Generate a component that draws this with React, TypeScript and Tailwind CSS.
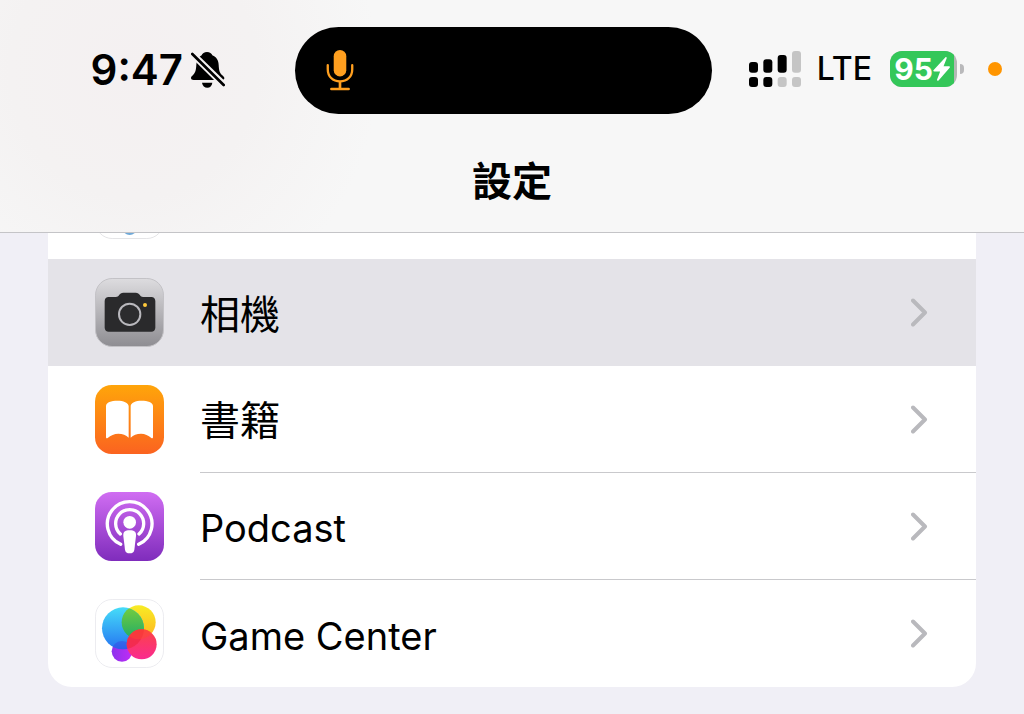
import type { ReactNode } from "react";
import clsx from "clsx";

interface SettingsItem {
  id: string;
  label: string;
  icon: ReactNode;
  active?: boolean;
  latin?: boolean;
}

function BellOffIcon() {
  return (
    <svg viewBox="0 0 102 108" className="h-9 w-[34px] shrink-0" aria-hidden="true">
      <defs>
        <mask id="bell-cut">
          <rect width="102" height="108" fill="#fff" />
          <path d="M-4 -2L106 106" stroke="#000" strokeWidth="20" />
        </mask>
      </defs>
      <g mask="url(#bell-cut)">
        <path d="M48 0c8 0 14 4 16 10 12 5 19 15 19 29 1 18 3 24 11 31 4 4 6 6 6 9 0 4-3 5-7 5H8c-5 0-8-2-8-6 0-3 2-5 6-9 7-7 9-14 10-31 0-14 6-23 16-28C34 4 40 0 48 0z" />
      </g>
      <path d="M33 92h31c-1 9-7 15-15 15s-15-6-16-15z" />
      <path d="M4 6L98 99" stroke="#000" strokeWidth="8" strokeLinecap="round" />
    </svg>
  );
}

function MicIcon() {
  return (
    <svg viewBox="0 0 84 124" className="h-[41px] w-7" fill="none" stroke="#ff9f1f" aria-hidden="true">
      <rect x="23" y="0" width="38" height="80" rx="19" fill="#ff9f1f" stroke="none" />
      <path d="M5 46v12c0 22 15 37 37 37s37-15 37-37V46" strokeWidth="7" strokeLinecap="round" />
      <path d="M42 94v23" strokeWidth="8" />
      <path d="M16 118h52" strokeWidth="8" strokeLinecap="round" />
    </svg>
  );
}

function SignalIcon() {
  return (
    <svg viewBox="0 0 156 108" className="h-9 w-[52px]" role="img" aria-label="Signal">
      <rect x="0" y="33" width="27" height="32" rx="9" />
      <rect x="43" y="25" width="27" height="40" rx="9" />
      <rect x="86" y="12" width="27" height="53" rx="9" />
      <rect x="129" y="0" width="27" height="65" rx="9" fill="#c5c5c5" />
      <rect x="0" y="78" width="27" height="30" rx="9" />
      <rect x="43" y="78" width="27" height="30" rx="9" />
      <rect x="86" y="78" width="27" height="30" rx="9" fill="#c5c5c5" />
      <rect x="129" y="78" width="27" height="30" rx="9" fill="#c5c5c5" />
    </svg>
  );
}

function Battery() {
  return (
    <div className="flex items-center gap-[3px]">
      <div className="flex h-9 w-[67px] overflow-hidden rounded-xl bg-[#b4b8b5]">
        <div className="flex w-16 items-center justify-center rounded-r-xs bg-[#34c759] text-white">
          <span className="text-[30px] leading-9 font-bold">95</span>
          <svg viewBox="0 0 50 70" className="h-6 w-[17px]" fill="currentColor" aria-hidden="true">
            <path d="M36 1L2 38c-2 2-1 4 2 4h17L12 66c-1 4 2 5 5 2l32-37c2-2 1-4-2-4H31l9-23c1-4-2-6-4-3z" />
          </svg>
        </div>
      </div>
      <div className="h-[10px] w-1 rounded-r-full bg-[#b9b9bb]" />
    </div>
  );
}

function ChevronIcon() {
  return (
    <svg viewBox="0 0 17 29" className="h-[29px] w-[17px]" fill="none" stroke="#b9b9bd" aria-hidden="true">
      <path d="M2 2.500L14 14.500L2 26.500" strokeWidth="4" strokeLinecap="round" strokeLinejoin="round" />
    </svg>
  );
}

function CameraIcon() {
  return (
    <svg viewBox="0 0 207 207" className="size-[69px] shrink-0" aria-hidden="true">
      <defs>
        <linearGradient id="camera-bg" x2="0" y2="1">
          <stop stopColor="#dddcdf" />
          <stop offset="1" stopColor="#8e8d92" />
        </linearGradient>
      </defs>
      <rect x="1.500" y="1.500" width="204" height="204" rx="50" fill="url(#camera-bg)" stroke="#c3c2c6" strokeWidth="3" />
      <path
        d="M41 57h22c4 0 7-2 9-5 3-5 7-8 13-8h37c6 0 10 3 13 8 2 3 5 5 9 5h25c7 0 12 5 12 12v80c0 7-5 12-12 12H41c-7 0-12-5-12-12V69c0-7 5-12 12-12z"
        fill="#2a2a2c"
      />
      <circle cx="104" cy="109" r="32" fill="#2c2c2e" stroke="#b9b8bd" strokeWidth="6" />
      <circle cx="150" cy="81" r="6" fill="#ffc93c" />
    </svg>
  );
}

function BooksIcon() {
  return (
    <svg viewBox="0 0 207 207" className="size-[69px] shrink-0" aria-hidden="true">
      <defs>
        <linearGradient id="books-bg" x2="0" y2="1">
          <stop stopColor="#ffa50a" />
          <stop offset="1" stopColor="#fb6320" />
        </linearGradient>
      </defs>
      <rect width="207" height="207" rx="50" fill="url(#books-bg)" />
      <g fill="#fff">
        <path d="M33 63c0-11 16-16 34-16s34 6 34 17v94c-8-8-18-12-31-12-12 0-23 5-32 13-3 2-5 1-5-3z" />
        <path d="M174 63c0-11-16-16-34-16s-33 6-33 17v94c8-8 18-12 31-12 12 0 22 5 31 13 3 2 5 1 5-3z" />
      </g>
    </svg>
  );
}

function PodcastIcon() {
  return (
    <svg viewBox="0 0 207 207" className="size-[69px] shrink-0" aria-hidden="true">
      <defs>
        <linearGradient id="podcast-bg" x2="0" y2="1">
          <stop stopColor="#d06df2" />
          <stop offset="1" stopColor="#7f2cbc" />
        </linearGradient>
      </defs>
      <rect width="207" height="207" rx="50" fill="url(#podcast-bg)" />
      <g fill="none" stroke="#fff" strokeWidth="10" strokeLinecap="round">
        <path d="M77 157a67 67 0 1 1 54 0" />
        <path d="M76 126a42 42 0 1 1 56 0" />
      </g>
      <circle cx="104" cy="91" r="19" fill="#fff" />
      <path d="M104 115c14 0 20 5 19 17l-5 41c-1 8-6 11-14 11s-13-3-14-11l-5-41c-1-12 5-17 19-17z" fill="#fff" />
    </svg>
  );
}

function GameCenterIcon() {
  return (
    <svg viewBox="0 0 207 207" className="size-[69px] shrink-0" aria-hidden="true">
      <defs>
        <linearGradient id="gc-blue" x2="0" y2="1">
          <stop stopColor="#45dcf8" />
          <stop offset="1" stopColor="#2675f2" />
        </linearGradient>
        <linearGradient id="gc-yellow" x2="0" y2="1">
          <stop stopColor="#f7ec25" />
          <stop offset="1" stopColor="#ffb321" />
        </linearGradient>
        <linearGradient id="gc-green" x2="0" y2="1">
          <stop stopColor="#79cf3c" />
          <stop offset="1" stopColor="#20ab67" />
        </linearGradient>
        <linearGradient id="gc-purple">
          <stop stopColor="#8d32ed" />
          <stop offset="1" stopColor="#c12cf5" />
        </linearGradient>
        <linearGradient id="gc-red" x2="0" y2="1">
          <stop stopColor="#fb4445" />
          <stop offset="1" stopColor="#fa2a90" />
        </linearGradient>
        <clipPath id="gc-clip-blue">
          <circle cx="84" cy="88" r="63" />
        </clipPath>
        <clipPath id="gc-clip-red">
          <circle cx="140" cy="136" r="45" />
        </clipPath>
      </defs>
      <rect x="1.500" y="1.500" width="204" height="204" rx="50" fill="#fff" stroke="#ececf0" strokeWidth="3" />
      <circle cx="81" cy="157" r="31" fill="url(#gc-purple)" />
      <circle cx="131" cy="70" r="51" fill="url(#gc-yellow)" />
      <circle cx="84" cy="88" r="63" fill="url(#gc-blue)" />
      <circle cx="81" cy="157" r="31" fill="#3f38df" fillOpacity="0.400" clipPath="url(#gc-clip-blue)" />
      <circle cx="131" cy="70" r="51" fill="url(#gc-green)" clipPath="url(#gc-clip-blue)" />
      <circle cx="140" cy="136" r="45" fill="url(#gc-red)" />
      <g clipPath="url(#gc-clip-red)">
        <circle cx="84" cy="88" r="63" fill="#ef2440" fillOpacity="0.600" />
        <circle cx="131" cy="70" r="51" fill="#ff4b30" fillOpacity="0.400" />
      </g>
    </svg>
  );
}

function PhotosIcon() {
  return (
    <svg viewBox="0 0 207 207" className="size-[69px] shrink-0" aria-hidden="true">
      <rect x="1.500" y="1.500" width="204" height="204" rx="50" fill="#fff" stroke="#e4e4e6" strokeWidth="3" />
      <ellipse cx="104" cy="157" rx="28" ry="38" fill="#6fa9d8" />
    </svg>
  );
}

const ITEMS: SettingsItem[] = [
  { id: "camera", label: "相機", icon: <CameraIcon />, active: true },
  { id: "books", label: "書籍", icon: <BooksIcon /> },
  { id: "podcast", label: "Podcast", icon: <PodcastIcon />, latin: true },
  { id: "game-center", label: "Game Center", icon: <GameCenterIcon />, latin: true },
];

function StatusBar() {
  return (
    <div className="grid grid-cols-[295fr_417fr_312fr] items-center">
      <div className="flex items-center justify-end gap-2 pr-[70px] pb-0.5">
        <span className="text-[42px] leading-[48px] font-semibold">9:47</span>
        <BellOffIcon />
      </div>
      <div className="flex h-[87px] items-center rounded-full bg-black pl-[31px]">
        <MicIcon />
      </div>
      <div className="flex items-center justify-end pr-[22px] pb-1">
        <SignalIcon />
        <span className="pr-[18px] pl-4 text-[32px] leading-10 font-medium">LTE</span>
        <Battery />
        <span className="ml-6 size-[14px] rounded-full bg-[#ff9500]" />
      </div>
    </div>
  );
}

function SettingsRow({ item, last }: { item: SettingsItem; last: boolean }) {
  return (
    <li>
      <a
        href={`#${item.id}`}
        className={clsx("flex h-[107px] items-center gap-9 pl-[47px]", item.active && "bg-[#e4e3e8]")}
      >
        {item.icon}
        <span
          className={clsx(
            "flex flex-1 items-center justify-between self-stretch pr-12",
            !last && !item.active && "border-b border-[#c9c9cc]"
          )}
        >
          <span className={clsx("pt-1 leading-[48px]", item.latin ? "text-[38px]" : "text-[40px]")}>
            {item.label}
          </span>
          <ChevronIcon />
        </span>
      </a>
    </li>
  );
}

export default function App() {
  return (
    <div className="min-h-screen bg-[#f0eff6] font-['Inter','Noto_Sans_CJK_TC',sans-serif] text-black">
      <header className="border-b border-[#c4c4c7] bg-[#f7f7f7] bg-[radial-gradient(24%_110%_at_13%_30%,#f4f0f1_0%,#f4f2f2_50%,#f7f7f7_100%)] pt-[27px] pb-5">
        <StatusBar />
        <h1 className="pt-[38px] text-center text-[40px] leading-[60px] font-bold">設定</h1>
      </header>

      <main className="px-12">
        <div className="overflow-hidden rounded-b-3xl bg-white">
          {/* previous row, mostly scrolled under the header */}
          <div className="flex h-[26px] flex-col justify-end overflow-hidden pb-5 pl-[47px]">
            <PhotosIcon />
          </div>
          <ul>
            {ITEMS.map((item, i) => (
              <SettingsRow key={item.id} item={item} last={i === ITEMS.length - 1} />
            ))}
          </ul>
        </div>
      </main>
    </div>
  );
}
